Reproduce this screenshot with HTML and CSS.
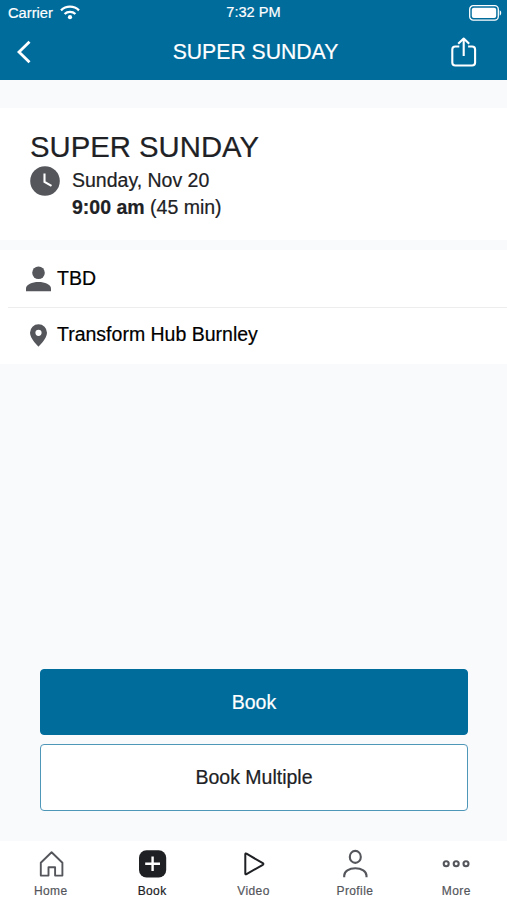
FILE: index.html
```html
<!DOCTYPE html>
<html lang="en">
<head>
  <meta charset="UTF-8">
  <meta name="viewport" content="width=device-width, initial-scale=1.0">
  <title>SUPER SUNDAY</title>
  <link rel="stylesheet" href="styles.css">
</head>
<body>
  <div class="app">
    <header class="header">
      <div class="status-bar">
        <div class="carrier">
          <span>Carrier</span>
          <svg class="wifi" width="20" height="15" viewBox="0 0 20 15" fill="none" stroke="#fff" stroke-width="2.3">
            <path d="M1 5.3a13 13 0 0 1 18 0"/>
            <path d="M4.6 9a7.8 7.8 0 0 1 10.8 0"/>
            <circle cx="10" cy="12.2" r="2.1" fill="#fff" stroke="none"/>
          </svg>
        </div>
        <span class="time">7:32 PM</span>
        <svg class="battery" width="33" height="16" viewBox="0 0 33 16">
          <rect x=".7" y=".7" width="28.6" height="14.4" rx="3.6" fill="none" stroke="#fff" stroke-width="1.3"/>
          <rect x="2.8" y="2.8" width="24.4" height="10.2" rx="2" fill="#fff"/>
          <path d="M30.7 5.2c2 .8 2 4.6 0 5.4z" fill="#fff"/>
        </svg>
      </div>
      <div class="nav-bar">
        <svg class="back" width="16" height="24" viewBox="0 0 16 24" fill="none" stroke="#fff" stroke-width="2.8">
          <path d="M13.5 1.7 3 12l10.5 10.3"/>
        </svg>
        <h1 class="nav-title">SUPER SUNDAY</h1>
        <svg class="share" width="26" height="30" viewBox="0 0 26 30" fill="none" stroke="#fff" stroke-width="2.1" stroke-linejoin="round">
          <path d="M8.3 9.500H4.300a3 3 0 0 0-3 3v13a3 3 0 0 0 3 3h16.800a3 3 0 0 0 3-3v-13a3 3 0 0 0-3-3h-4"/>
          <path d="M12.700 19V2M7.200 6.800l5.500-5.300 5.500 5.300"/>
        </svg>
      </div>
    </header>

    <section class="summary">
      <h2>SUPER SUNDAY</h2>
      <div class="when">
        <svg class="clock" width="30" height="30" viewBox="0 0 30 30">
          <circle cx="15" cy="15" r="14.8" fill="#54565c"/>
          <path d="M14.5 7.5v8.300l7 4" fill="none" stroke="#fff" stroke-width="2.1"/>
        </svg>
        <div class="when-text">
          <p>Sunday, Nov 20</p>
          <p><b>9:00 am</b> (45 min)</p>
        </div>
      </div>
    </section>

    <section class="details">
      <div class="detail-row">
        <svg width="26" height="26" viewBox="0 0 26 26" fill="#54565c">
          <circle cx="12.5" cy="6.800" r="6.300"/>
          <path d="M0 25.300V22.500C0 18.500 6.200 16 12.500 16S25 18.500 25 22.500v2.800z"/>
        </svg>
        <span>TBD</span>
      </div>
      <div class="detail-row">
        <svg width="26" height="26" viewBox="0 0 26 26">
          <path d="M12.500 2.300a8.500 8.500 0 0 0-8.500 8.500c0 6 8.500 13.900 8.500 13.900s8.500-7.900 8.500-13.900a8.500 8.500 0 0 0-8.500-8.500zm0 5.400a3.100 3.100 0 1 1 0 6.200 3.100 3.100 0 0 1 0-6.200z" fill="#54565c" fill-rule="evenodd"/>
        </svg>
        <span>Transform Hub Burnley</span>
      </div>
    </section>

    <div class="actions">
      <button class="btn btn-primary">Book</button>
      <button class="btn btn-outline">Book Multiple</button>
    </div>

    <nav class="tabs">
      <a class="tab">
        <svg width="30" height="30" viewBox="0 0 30 30" fill="none" stroke="#54565c" stroke-width="1.9" stroke-linejoin="round">
          <path d="M4.800 13.700 15.600 3.300l10.800 10.400v12.900h-7.300v-8.300h-6.600v8.300H4.800z"/>
        </svg>
        <span>Home</span>
      </a>
      <a class="tab active">
        <svg width="30" height="30" viewBox="0 0 30 30">
          <rect x="2" y="1.300" width="27.200" height="27.200" rx="7.500" fill="#1f2023"/>
          <path d="M15.600 7.500v14.600M8.200 14.800H23" stroke="#fff" stroke-width="2.4"/>
        </svg>
        <span>Book</span>
      </a>
      <a class="tab">
        <svg width="30" height="30" viewBox="0 0 30 30" fill="none" stroke="#1f2023" stroke-width="2" stroke-linejoin="round">
          <path d="M6.300 5.300v19.200q0 1.300 1.200.6l16.300-9.300q1.200-.8 0-1.600L7.500 4.700q-1.200-.7-1.200.6z"/>
        </svg>
        <span>Video</span>
      </a>
      <a class="tab">
        <svg width="30" height="30" viewBox="0 0 30 30" fill="none" stroke="#54565c" stroke-width="2.1">
          <ellipse cx="15.300" cy="7.900" rx="5.500" ry="6"/>
          <path d="M4.200 28.200v-1.500c0-4.300 4.800-7.400 11.100-7.400s11.200 3.100 11.200 7.400v1.500"/>
        </svg>
        <span>Profile</span>
      </a>
      <a class="tab">
        <svg width="30" height="30" viewBox="0 0 30 30" fill="none" stroke="#54565c" stroke-width="2.1">
          <circle cx="5.200" cy="14.800" r="2.500"/>
          <circle cx="15.200" cy="14.800" r="2.500"/>
          <circle cx="25" cy="14.800" r="2.500"/>
        </svg>
        <span>More</span>
      </a>
    </nav>
  </div>
</body>
</html>
```

FILE: styles.css
```css
* {
  box-sizing: border-box;
}

body {
  font-family: 'Liberation Sans', Arial, sans-serif;
  background-color: #f8fafc;
  color: #202124;
  margin: 0;
  -webkit-text-stroke: 0.2px;
}

h1, h2, p {
  margin: 0;
  font-weight: 400;
}

svg {
  display: block;
  flex-shrink: 0;
}

.app {
  display: flex;
  flex-direction: column;
  height: 900px;
}

.header {
  height: 80px;
  background-color: #006c9c;
  color: #fff;
}

.status-bar {
  display: grid;
  grid-template-columns: 1fr auto 1fr;
  align-items: center;
  height: 25px;
  padding: 0 5px 0 8px;
  font-size: 14.7px;
}

.carrier {
  display: flex;
  align-items: center;
  gap: 7px;
}

.time {
  font-size: 14.6px;
  line-height: 22px;
  margin-right: 3px;
  padding-bottom: 2px;
}

.battery {
  justify-self: end;
}

.nav-bar {
  display: grid;
  grid-template-columns: 1fr auto 1fr;
  align-items: center;
  height: 54px;
  padding: 0 30px 0 16px;
}

.nav-title {
  font-size: 21.2px;
  line-height: 54px;
  margin-left: 18px;
}

.share {
  justify-self: end;
}

.summary {
  margin-top: 28px;
  height: 132px;
  padding: 21px 30px 0;
  background-color: #fff;
}

.summary h2 {
  font-size: 29.3px;
  line-height: 36px;
}

.when {
  display: flex;
  gap: 12px;
  padding-top: 1px;
}

.when-text {
  padding-top: 1px;
  font-size: 19.5px;
  line-height: 27px;
}

.details {
  margin-top: 10px;
  height: 114px;
  padding-left: 8px;
  background-color: #fff;
}

.detail-row {
  display: flex;
  align-items: center;
  gap: 5px;
  height: 57px;
  padding-left: 18px;
  color: #000;
  font-size: 19.5px;
}

.detail-row + .detail-row {
  height: 56px;
  padding-bottom: 3px;
  border-top: 1px solid #ebedef;
}

.detail-row + .detail-row svg {
  margin-top: 2px;
}

.actions {
  display: flex;
  flex-direction: column;
  gap: 9px;
  margin-top: auto;
  padding: 0 39px 30px 40px;
}

.btn {
  height: 66px;
  border: 1.5px solid #006c9c;
  border-radius: 4px;
  font-family: inherit;
  font-size: 19.5px;
}

.btn-primary {
  background-color: #006c9c;
  color: #fff;
}

.btn-outline {
  height: 67px;
  background-color: #fff;
  border-color: #4f97b8;
  color: #202124;
}

.tabs {
  display: flex;
  height: 59px;
  background-color: #fff;
}

.tab {
  flex: 1;
  display: flex;
  flex-direction: column;
  align-items: center;
  padding-top: 8px;
  color: #54565c;
  font-size: 12px;
  line-height: 14px;
  letter-spacing: 0.4px;
}

.tab span {
  margin-top: 5px;
}

.tab.active {
  color: #202124;
}
```
